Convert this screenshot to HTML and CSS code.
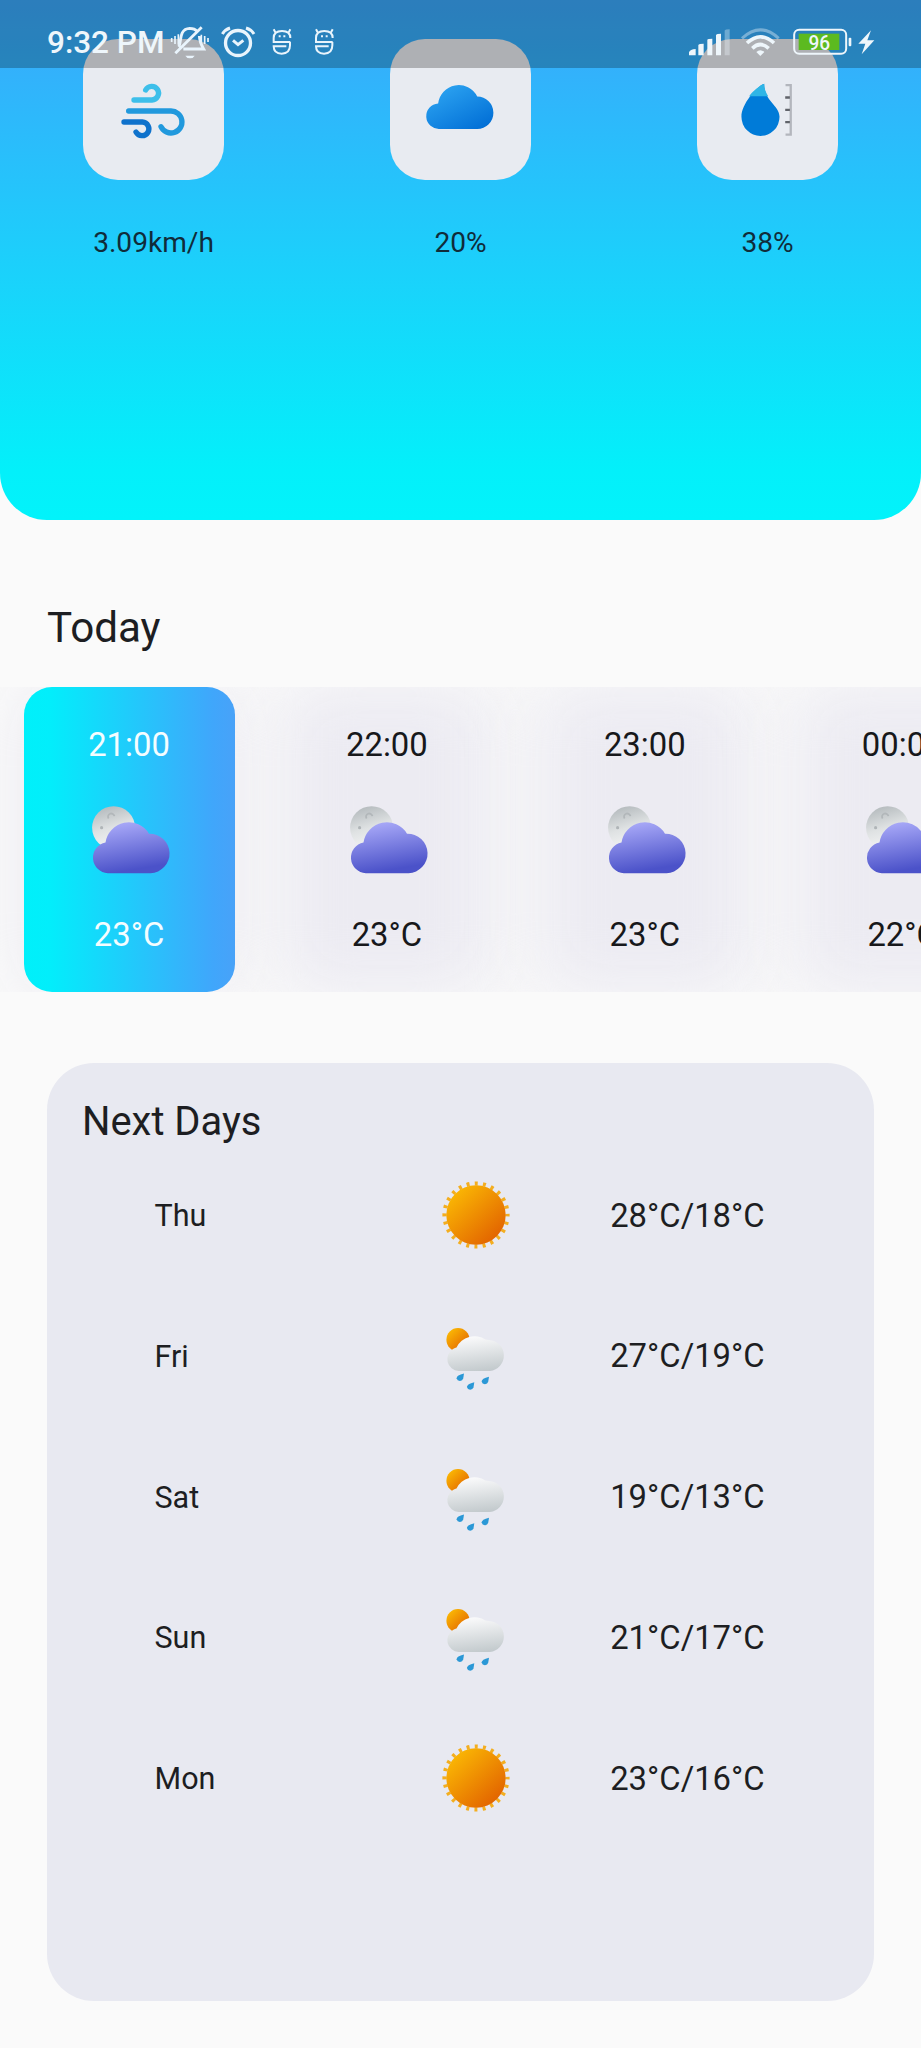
FILE: index.html
```html
<!DOCTYPE html>
<html lang="en">
<head>
<meta charset="utf-8">
<title>Weather</title>
<link rel="stylesheet" href="styles.css">
</head>
<body>
<svg class="sprite" aria-hidden="true">
  <defs>
    <linearGradient id="g-night" x1="0" y1="0" x2=".25" y2="1"><stop offset="0" stop-color="#b1b1fc"/><stop offset="1" stop-color="#4b52c9"/></linearGradient>
    <linearGradient id="g-moon" x1=".3" y1="0" x2=".6" y2="1"><stop offset="0" stop-color="#b4babd"/><stop offset=".5" stop-color="#dfe2e3"/><stop offset="1" stop-color="#f7f7f7"/></linearGradient>
    <linearGradient id="g-sun" x1=".1" y1=".1" x2=".85" y2=".9"><stop offset="0" stop-color="#fbb904"/><stop offset="1" stop-color="#e26300"/></linearGradient>
    <linearGradient id="g-rain" x1=".4" y1="0" x2=".6" y2="1"><stop offset="0" stop-color="#fbfbfc"/><stop offset="1" stop-color="#c3cacd"/></linearGradient>
    <linearGradient id="g-cloud" x1=".1" y1="0" x2=".9" y2="1"><stop offset="0" stop-color="#2fa7f3"/><stop offset="1" stop-color="#006dd5"/></linearGradient>
  </defs>
  <symbol id="night" viewBox="0 0 90 90">
    <circle cx="29.6" cy="32.7" r="21.5" fill="url(#g-moon)"/>
    <path d="M24.600 23.500a3.200 3.200 0 1 1 5.800-2.300" fill="none" stroke="#b2b7ba" stroke-width="1.800"/>
    <circle cx="17.6" cy="32.7" r="1.6" fill="#b0b5b8"/>
    <path d="M23.800 78.200A15.500 15.500 0 0 1 21.500 47.500 A23.600 23.600 0 0 1 65 38.700 A19.700 19.700 0 0 1 66.600 78.200Z" fill="url(#g-night)"/>
  </symbol>
  <symbol id="sun" viewBox="0 0 80 80">
    <circle cx="40" cy="40" r="31.500" fill="none" stroke="#f3ae20" stroke-width="4.200" stroke-dasharray="3 5.247" stroke-dashoffset="1.500"/>
    <circle cx="40" cy="40" r="29.700" fill="url(#g-sun)"/>
  </symbol>
  <symbol id="showers" viewBox="0 0 80 80">
    <circle cx="22" cy="23.700" r="11.600" fill="url(#g-sun)"/>
    <path d="M22.600 54.900A11.800 11.800 0 0 1 17 33 Q19 31.500 20.500 31.500 A20 20 0 0 1 49.500 23.500 L53 24 A15.500 15.500 0 0 1 54 54.900Z" fill="url(#g-rain)"/>
    <g fill="#2b98d6">
      <path id="drop" d="M28 57.500Q20.600 59.300 20.600 62.300A3.400 3.400 0 0 0 27.200 62.500Q27.600 60 28 57.500Z"/>
      <use href="#drop" x="10.300" y="8.800"/>
      <use href="#drop" x="25" y="3.200"/>
    </g>
  </symbol>
</svg>

<header class="status">
  <span class="clock">9:32 PM</span>
  <svg class="status-left" viewBox="505 75 506 105" fill="none" stroke="#e9f4fc" stroke-width="8.500">
    <path d="M537 141C546 130 536 86 570 85Q585 85 593 94M599 108C600 129 607 139 612 147H551M606 82 527 160"/>
    <path d="M557 167h28q-4 8-14 8t-14-8Z" fill="#e9f4fc" stroke="none"/>
    <path d="M516 114v12M526 108v24M536 103v31M605 104v27M615 108v24M625 114v12" stroke-width="5"/>
    <circle cx="715" cy="129" r="37.500" stroke-width="10"/>
    <path d="M700 121l15 13 16-13" stroke-width="9"/>
    <path d="M668 102Q676 89 691 84M739 84Q755 89 763 102" stroke-width="9"/>
    <g id="mascot" stroke-width="6">
      <path d="M872 126H822V114Q822 93 847 93Q872 93 872 114M822 88l6 11M872 88l-6 11M871 126V136Q871 161 846 161Q822 161 822 139H860"/>
      <path d="M837 109h6M851 109h6"/>
    </g>
    <use href="#mascot" x="127"/>
  </svg>
  <svg class="status-right" viewBox="84 75 570 105" fill="#eef6fb">
    <path d="M87 166V157Q90 148 107 147V166ZM115 166V135Q117 131 131 131V166ZM142 166V119Q144 116 157 116V166ZM168 166V105Q170 101 183 101V166Z"/>
    <path d="M194 166V92Q196 88 209 88V166Z" opacity=".35"/>
    <g fill="none" stroke="#eef6fb" stroke-width="9">
      <path d="M246 115Q301 64 356 115" opacity=".4"/>
      <path d="M261 129Q301 92 342 129" stroke-width="11"/>
      <path d="M277 145Q301 122 326 145" stroke-width="11"/>
    </g>
    <path d="M289 156Q301 145 313 156L301 168Z"/>
    <rect x="402.500" y="89.500" width="156" height="72" rx="15" fill="none" stroke="#eef6fb" stroke-width="6"/>
    <rect x="416" y="101" width="122" height="49" fill="#5cba20"/>
    <rect x="566" y="113" width="8" height="26" rx="3"/>
    <text class="battery-text" x="478" y="150" text-anchor="middle" textLength="65" lengthAdjust="spacingAndGlyphs">96</text>
    <path d="M633 91 595 131H616L605 163 643 121H622Z"/>
  </svg>
</header>

<section class="hero">
  <div class="metric">
    <svg class="tile" viewBox="250 115 423 423" fill="none" stroke-width="16" stroke-linecap="round">
      <path d="M403 298H457A20.500 20.500 0 1 0 438 268" stroke="#3dbfea"/>
      <path d="M387 331H513A33 33 0 1 1 484 378" stroke="#2199dd"/>
      <path d="M373 364H428A20.500 20.500 0 1 1 409 394" stroke="#0f72cc"/>
    </svg>
    <span>3.09km/h</span>
  </div>
  <div class="metric">
    <svg class="tile" viewBox="91 115 422 422">
      <path d="M240 384A38 38 0 0 1 235 308A62 62 0 0 1 352 287A48.500 48.500 0 0 1 352 384Z" fill="url(#g-cloud)"/>
    </svg>
    <span>20%</span>
  </div>
  <div class="metric">
    <svg class="tile" viewBox="112 115 422 422">
      <path d="M313 249C290 258 245 310 245 348A57 57 0 0 0 359 348C359 314 312 300 313 249Z" fill="#007bd8"/>
      <path d="M313 249C301 254 281 269 268 286H325Q313 268 313 249Z" fill="#2fb5e6"/>
      <path d="M377 253H392.500V401H377" fill="none" stroke="#b3b6bd" stroke-width="7"/>
      <path d="M376 290H390M376 327H390M376 364H390" stroke="#60636a" stroke-width="7"/>
    </svg>
    <span>38%</span>
  </div>
</section>

<h2 class="today">Today</h2>
<section class="hours">
  <div class="hour current"><span>21:00</span><svg class="hour-icon"><use href="#night"/></svg><span>23°C</span></div>
  <div class="hour"><span>22:00</span><svg class="hour-icon"><use href="#night"/></svg><span>23°C</span></div>
  <div class="hour"><span>23:00</span><svg class="hour-icon"><use href="#night"/></svg><span>23°C</span></div>
  <div class="hour"><span>00:00</span><svg class="hour-icon"><use href="#night"/></svg><span>22°C</span></div>
</section>

<section class="days">
  <h2 class="days-title">Next Days</h2>
  <div class="day"><span class="name">Thu</span><svg class="day-icon"><use href="#sun"/></svg><span class="range">28°C/18°C</span></div>
  <div class="day"><span class="name">Fri</span><svg class="day-icon"><use href="#showers"/></svg><span class="range">27°C/19°C</span></div>
  <div class="day"><span class="name">Sat</span><svg class="day-icon"><use href="#showers"/></svg><span class="range">19°C/13°C</span></div>
  <div class="day"><span class="name">Sun</span><svg class="day-icon"><use href="#showers"/></svg><span class="range">21°C/17°C</span></div>
  <div class="day"><span class="name">Mon</span><svg class="day-icon"><use href="#sun"/></svg><span class="range">23°C/16°C</span></div>
</section>
</body>
</html>
```

FILE: styles.css
```css
* { box-sizing: border-box; }
body {
  margin: 0;
  height: 2048px;
  overflow: hidden;
  background: #fafafa;
  color: #1d1e22;
  font-family: Roboto, sans-serif;
}
h2 { margin: 0; font-weight: 400; }
svg { display: block; flex: none; }
.sprite { position: absolute; width: 0; height: 0; }

/* Translucent system bar over the scrolled page */
.status {
  position: absolute;
  inset: 0 0 auto;
  z-index: 2;
  height: 68px;
  padding: 25px 43px 0 47px;
  display: flex;
  align-items: flex-start;
  background: rgba(0, 0, 0, .25);
}
.clock {
  width: 121.300px;
  font-size: 31.500px;
  font-weight: 500;
  line-height: 35px;
  color: #eef6fb;
  white-space: nowrap;
}
.status-left { width: 168.700px; height: 35px; }
.status-right { width: 190px; height: 35px; margin-left: auto; }
.battery-text { font-size: 61px; font-weight: 500; }

.hero {
  height: 520px;
  padding-top: 38.500px;
  display: grid;
  grid-template-columns: repeat(3, 1fr);
  border-radius: 0 0 47px 47px;
  background: linear-gradient(#3ba8fb 0, #33b1fb 68px, #1bd1fb 270px, #03f0fa 470px, #02f3fa);
}
.metric {
  display: flex;
  flex-direction: column;
  align-items: center;
  gap: 46.500px;
  font-size: 28.100px;
  line-height: 34px;
  color: #102c3a;
}
.tile { width: 141px; height: 141px; border-radius: 35px; background: #e8ebf1; }

.today { padding: 82px 47px 34px; font-size: 42.200px; line-height: 51px; }

.hours {
  height: 305px;
  padding-left: 23.500px;
  display: flex;
  gap: 46.900px;
  overflow: hidden;
}
.hour {
  position: relative;
  flex: none;
  width: 211px;
  padding: 38px 0 37px;
  display: flex;
  flex-direction: column;
  align-items: center;
  justify-content: space-between;
  font-size: 32.800px;
  line-height: 40px;
  color: #17181b;
}
/* Soft shade behind each hour, clipped by the strip */
.hour::before {
  content: "";
  position: absolute;
  inset: -4px -4px;
  z-index: -1;
  border-radius: 35px;
  background: #ecebf2;
  filter: blur(32px);
}
.current { border-radius: 28px; background: linear-gradient(90deg, #00f0fa 0, #02eefb 12%, #40a6fb 90%, #48a2f8); color: #f4fdff; }
.hour-icon { width: 90px; height: 90px; }

.days {
  margin: 71px 47px 0;
  height: 938px;
  padding-top: 34px;
  border-radius: 47px;
  background: #e8e9f1;
}
.days-title { padding-left: 35px; font-size: 39.900px; line-height: 50px; }
.day {
  height: 140.800px;
  padding-left: 107.500px;
  display: grid;
  grid-template-columns: 281.700px 80px 1fr;
  align-items: center;
}
.days-title + .day { margin-top: -2.300px; }
.name { padding-top: 1px; font-size: 30.500px; }
.range { padding: 1px 0 0 94px; font-size: 32.800px; }
.day-icon { width: 80px; height: 80px; }
```
